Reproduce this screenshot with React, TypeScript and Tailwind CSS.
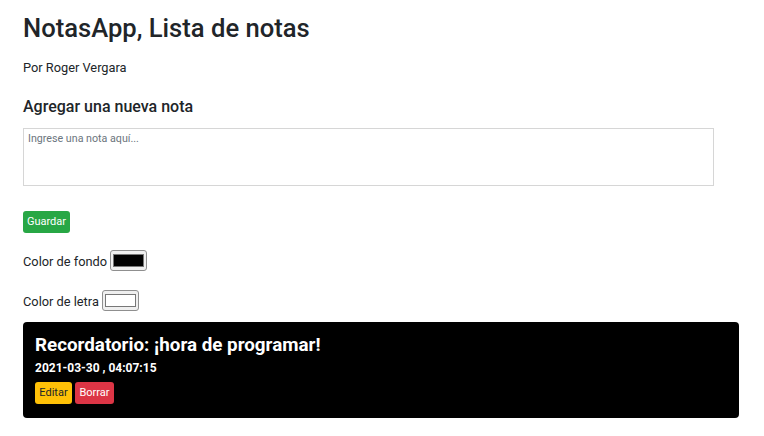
import React from "react";

function ColorSwatch({ color }: { color: string }) {
  return (
    <span className="inline-flex h-[21px] w-[37px] items-center justify-center rounded-[3px] border border-[#8f8f8f] bg-[#efefef] px-[2px] py-[3px]">
      <span className="block h-full w-full border border-[#777]" style={{ backgroundColor: color }} />
    </span>
  );
}

export default function App() {
  return (
    <div className="min-h-[436px] bg-white px-[23px] pt-[13px] font-['Roboto','Liberation_Sans',sans-serif] text-[#212529]">
      <h1 className="text-[25.6px] font-medium leading-[31px]">NotasApp, Lista de notas</h1>
      <p className="mt-[14px] text-[12.8px] leading-[19px]">Por Roger Vergara</p>
      <h5 className="mt-[20px] text-[16px] font-medium leading-[19px]">Agregar una nueva nota</h5>
      <div className="mt-[12px] h-[58px] w-[691px] border border-[#d6d6d6] bg-white px-[4px] pt-[3px] text-[10.7px] leading-[14px] text-[#6c757d]">
        Ingrese una nota aquí...
      </div>
      <div className="mt-[25px] flex">
        <button className="h-[22px] w-[47px] rounded-[3px] bg-[#28a745] text-[11px] leading-[22px] text-white">
          Guardar
        </button>
      </div>
      <div className="mt-[17px] flex h-[21px] items-end gap-[3px] text-[12.8px] leading-[16px]">
        <span className="pb-[1px]">Color de fondo</span>
        <ColorSwatch color="#000000" />
      </div>
      <div className="mt-[19px] flex h-[21px] items-end gap-[3px] text-[12.8px] leading-[16px]">
        <span className="pb-[1px]">Color de letra</span>
        <ColorSwatch color="#ffffff" />
      </div>
      <div className="mt-[11px] h-[96px] w-[716px] rounded-[4px] bg-black px-[12px] pt-[12px] text-white">
        <h4 className="text-[18.8px] font-bold leading-[23px]">Recordatorio: ¡hora de programar!</h4>
        <h6 className="mt-[3px] text-[12px] font-bold leading-[16px]">2021-03-30 , 04:07:15</h6>
        <div className="mt-[6px] flex gap-[3px]">
          <button className="h-[22px] w-[37px] rounded-[3px] bg-[#ffc107] text-[11px] leading-[22px] text-[#212529]">
            Editar
          </button>
          <button className="h-[22px] w-[39px] rounded-[3px] bg-[#dc3545] text-[11px] leading-[22px] text-white">
            Borrar
          </button>
        </div>
      </div>
    </div>
  );
}
